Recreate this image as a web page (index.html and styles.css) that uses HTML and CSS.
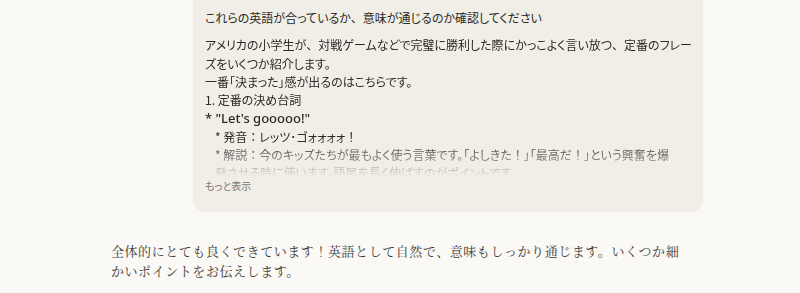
FILE: index.html
```html
<!DOCTYPE html>
<html lang="ja">
<head>
<meta charset="utf-8">
<link rel="stylesheet" href="styles.css">
</head>
<body>
<div class="page">
  <div class="card">
    <p class="title">これらの英語が合っているか<span class="fw">、</span>意味が通じるのか確認してください</p>
    <div class="content">
      <p>アメリカの小学生が<span class="fw">、</span>対戦ゲームなどで完璧に勝利した際にかっこよく言い放つ<span class="fw">、</span>定番のフレーズをいくつか紹介します。</p>
      <p>一番「決まった」感が出るのはこちらです。</p>
      <p>1. 定番の決め台詞</p>
      <p class="big">* "Let's gooooo!"</p>
      <p class="ind">* 発音<span class="fw">：</span>レッツ･ゴォォォォ<span class="fw">！</span></p>
      <p class="ind narrow">* 解説<span class="fw">：</span>今のキッズたちが最もよく使う言葉です。「よしきた<span class="fw">！</span>」「最高だ<span class="fw">！</span>」という興奮を爆発させる時に使います。語尾を長く伸ばすのがポイントです。</p>
    </div>
    <div class="more">もっと表示</div>
  </div>
  <div class="reply">全体的にとても良くできています！英語として自然で、意味もしっかり通じます。いくつか細かいポイントをお伝えします。</div>
</div>
</body>
</html>
```
FILE: styles.css
```css
html, body {
  margin: 0;
  padding: 0;
  background: #faf9f5;
}
.page {
  width: 800px;
  height: 293px;
  overflow: hidden;
}
.card {
  margin-left: 193px;
  width: 510px;
  box-sizing: border-box;
  background: #f0eee7;
  border-radius: 0 0 12px 12px;
  padding: 9px 10px 19px 12px;
  font-family: "Noto Sans CJK JP", "Noto Sans", sans-serif;
  font-feature-settings: "palt";
  color: #2b2a26;
  font-size: 12px;
  line-height: 18.3px;
}
.fw {
  font-feature-settings: normal;
}
.title {
  margin: 0 0 9px 0;
}
.content {
  height: 144px;
  overflow: hidden;
  -webkit-mask-image: linear-gradient(to bottom, #000 0, #000 104px, rgba(0,0,0,0.45) 126px, rgba(0,0,0,0.02) 140px);
  mask-image: linear-gradient(to bottom, #000 0, #000 104px, rgba(0,0,0,0.45) 126px, rgba(0,0,0,0.02) 140px);
}
.content p {
  margin: 0;
}
.content .big {
  font-family: "Noto Sans", "Noto Sans CJK JP", sans-serif;
  font-size: 13px;
  font-weight: 500;
}
.content .ind {
  padding-left: 10px;
}
.content .narrow {
  padding-right: 13px;
}
.more {
  font-size: 10px;
  line-height: 14px;
  color: #7a776f;
  margin-top: -1px;
}
.reply {
  margin: 29px 0 0 111px;
  width: 575px;
  font-family: "Noto Serif CJK JP", "Liberation Serif", "Noto Sans CJK JP", serif;
  font-size: 13px;
  letter-spacing: 0.56px;
  line-height: 20px;
  color: #3a3935;
}
```
